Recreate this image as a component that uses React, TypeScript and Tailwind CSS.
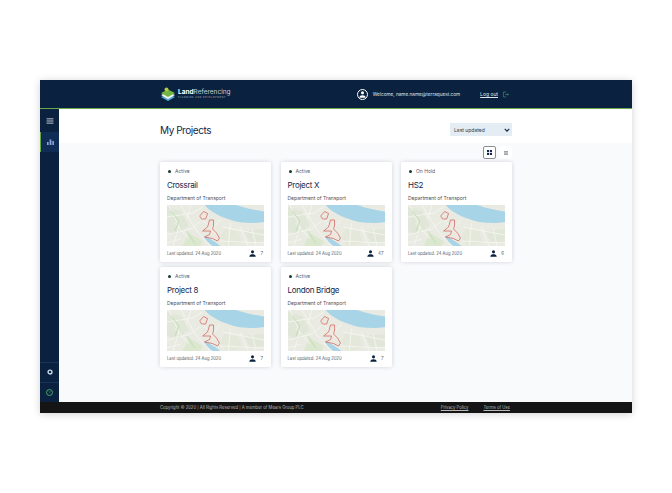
import React from "react";

const font = { fontFamily: "Inter, 'Liberation Sans', sans-serif" };

function MapThumb() {
  return (
    <svg viewBox="0 0 98 41" className="block h-[41px] w-full blur-[0.3px]" preserveAspectRatio="none">
      <rect width="98" height="41" fill="#e9eae2" />
      <path d="M0 2L14 6L22 20L10 30L0 26Z" fill="#e0e7d8" />
      <path d="M22 28L36 36L34 41H16Z" fill="#dbe7cf" />
      <path d="M58 24L72 26L76 38L60 41L54 32Z" fill="#e3e8da" />
      <path d="M78 26L98 24V36L84 38Z" fill="#e0e7d8" />
      <path d="M2 0L12 22L6 41M0 12L26 8L36 2M14 0L30 26L44 41M0 30L24 24L34 16M24 0L20 14M32 10L50 30M54 14L46 24M8 18L22 34M56 22L98 30M64 18L62 41M74 22L82 41M86 24L90 41M54 36L98 38M0 38L14 34" stroke="#f8f7f2" strokeWidth="0.8" fill="none" />
      <path d="M4 6L12 16L8 26M20 26L28 38" stroke="#c8dfb9" strokeWidth="1.1" fill="none" />
      <path d="M38 0C44 7 54 12 66 15.5C77 18.5 89 18.5 98 17V6.5C90 5.5 78 3 70 0Z" fill="#a8d4e8" />
      <path d="M37 31C43 33 49 37 54 41H46C42 38 39 35 37 31Z" fill="#a8d4e8" />
      <path d="M33 11L37 6.5L41 8.5L39 14L35 14Z" fill="#f3e6dc" fillOpacity="0.4" stroke="#c9453f" strokeWidth="0.6" />
      <path d="M43 15L47 15L47 21L46 24L50 28L53 33L51 36L46 33.5L38 32L43 29.5L44 26L36 26L41 22Z" fill="#f3e6dc" fillOpacity="0.4" stroke="#c9453f" strokeWidth="0.6" />
    </svg>
  );
}

function UserIcon({ className, color = "#0a2240" }: { className: string; color?: string }) {
  return (
    <svg viewBox="0 0 12 12" className={className} fill={color}>
      <circle cx="6" cy="3.2" r="2.6" />
      <path d="M0.5 11.5C0.5 8.6 3 7.2 6 7.2S11.5 8.6 11.5 11.5Z" />
    </svg>
  );
}

function Card({ status, title, users }: { status: string; title: string; users: string }) {
  return (
    <div className="flex h-[100px] w-[111px] flex-col rounded-[2px] bg-white px-[7px] pt-[6px] shadow-[0_0_4px_rgba(30,40,70,0.18)]">
      <div className="flex h-[6px] items-center gap-[4px]">
        <span className="ml-[1px] h-[3px] w-[3px] rounded-full bg-[#143a2e]" />
        <span className="text-[5px] leading-[6px] text-[#5a6068]">{status}</span>
      </div>
      <div className="mt-[6px] text-[8px] leading-[10px] font-normal tracking-[-0.3px] text-[#12264a]">{title}</div>
      <div className="mt-[5px] text-[5px] leading-[6px] text-[#4a5058]">Department of Transport</div>
      <div className="mt-[4px]">
        <MapThumb />
      </div>
      <div className="mt-[4px] flex items-center justify-between pr-[1px]">
        <span className="text-[4.2px] leading-[6px] text-[#5a6068]">Last updated: 24 Aug 2020</span>
        <span className="flex items-center gap-[4px]">
          <UserIcon className="h-[7px] w-[7px]" />
          <span className="text-[4.5px] leading-[6px] text-[#5a6068]">{users}</span>
        </span>
      </div>
    </div>
  );
}

function Logo() {
  return (
    <div className="flex items-center gap-[2px]">
      <svg viewBox="0 0 16 15" className="h-[15px] w-[16px]">
        <path d="M8 7L15 10L8 14L1 10Z" fill="#5aa7d6" />
        <path d="M8 5L15 8L8 12L1 8Z" fill="#f1f5ef" />
        <path d="M8 2.5L15 6L8 10L1 6Z" fill="#6fb53f" />
        <circle cx="6.5" cy="2.5" r="2" fill="#b7c934" />
      </svg>
      <div className="flex flex-col">
        <div className="text-[6.5px] leading-[7px] text-[#c5d0dc]">
          <span className="font-bold text-white">Land</span>Referencing
        </div>
        <div className="text-[2.2px] leading-[3px] tracking-[0.6px] text-[#aab6c4]">PLANNING AND DEVELOPMENT</div>
      </div>
    </div>
  );
}

export default function App() {
  return (
    <div style={font} className="h-[493px] w-[672px] overflow-hidden bg-white pt-[80px] pl-[40px]">
      <div className="flex h-[333px] w-[592px] flex-col shadow-[0_1px_8px_rgba(0,0,0,0.18)]">
        <header className="flex h-[29px] shrink-0 items-center border-b border-[#6aa84f] bg-[#0a2240] pr-[123px] pl-[120px]">
          <Logo />
          <div className="ml-auto flex items-center gap-[5px]">
            <div className="flex h-[11px] w-[11px] items-center justify-center overflow-hidden rounded-full border border-white bg-[#0a2240]">
              <UserIcon className="h-[7px] w-[7px]" color="#ffffff" />
            </div>
            <span className="text-[4.7px] leading-[6px] text-[#dfe5ec]">Welcome, name.name@terraquest.com</span>
          </div>
          <span className="ml-[20px] text-[5px] leading-[6px] text-[#dfe5ec] underline">Log out</span>
          <svg viewBox="0 0 10 10" className="ml-[4px] h-[7px] w-[7px]" fill="none" stroke="#3f8f5f" strokeWidth="1">
            <path d="M6 1.5H2V8.5H6M4.5 5H9.5M8 3.5L9.5 5L8 6.5" />
          </svg>
        </header>
        <div className="flex min-h-0 flex-1">
          <aside className="flex w-[19px] shrink-0 flex-col bg-[#0a2240]">
            <div className="flex h-[23px] items-center justify-center">
              <svg viewBox="0 0 8 7" className="h-[6px] w-[8px]" stroke="#d8dee6" strokeWidth="1">
                <path d="M0 1H8M0 3.5H8M0 6H8" />
              </svg>
            </div>
            <div className="flex h-[20px] items-center justify-center border-l-[1.5px] border-[#6aa84f] bg-[#0f2d55] pb-[1px]">
              <svg viewBox="0 0 7 6" className="h-[6px] w-[7px]" fill="#8fa6e0">
                <rect x="0" y="3" width="1.6" height="3" />
                <rect x="2.6" y="0.5" width="1.8" height="5.5" />
                <rect x="5.3" y="2" width="1.6" height="4" />
              </svg>
            </div>
            <div className="mt-auto flex h-[20px] items-center justify-center border-t border-[#17345c] pb-[1px]">
              <svg viewBox="0 0 8 8" className="h-[6px] w-[6px]">
                <circle cx="4" cy="4" r="2.6" fill="none" stroke="#cfe0ee" strokeWidth="1.8" />
              </svg>
            </div>
            <div className="flex h-[20px] items-center justify-center border-t border-[#17345c]">
              <div className="flex h-[7px] w-[7px] items-center justify-center rounded-full border border-[#4fa86a] text-[4px] leading-none text-[#4fa86a]">?</div>
            </div>
          </aside>
          <main className="flex min-w-0 flex-1 flex-col bg-[#f9fafc]">
            <div className="flex h-[34px] shrink-0 items-start justify-between bg-white pt-[14px] pr-[120px] pl-[101px]">
              <h1 className="text-[10px] leading-[14px] font-normal tracking-[-0.45px] text-[#12264a]">My Projects</h1>
              <div className="flex h-[13px] w-[62px] items-center justify-between bg-[#e3edf3] pr-[2px] pl-[4px]">
                <span className="text-[5px] leading-[6px] text-[#333a44]">Last updated</span>
                <svg viewBox="0 0 8 5" className="h-[4px] w-[6px]" fill="none" stroke="#12264a" strokeWidth="1.5">
                  <path d="M1 1L4 4L7 1" />
                </svg>
              </div>
            </div>
            <div className="pr-[120px] pl-[101px]">
              <div className="flex h-[19px] items-center justify-end gap-[3px]">
                <div className="flex h-[13px] w-[13px] items-center justify-center rounded-[2px] border border-[#8a8f96] bg-white">
                  <svg viewBox="0 0 5 5" className="h-[5px] w-[5px]" fill="#12264a">
                    <rect width="2.1" height="2.1" />
                    <rect x="2.9" width="2.1" height="2.1" />
                    <rect y="2.9" width="2.1" height="2.1" />
                    <rect x="2.9" y="2.9" width="2.1" height="2.1" />
                  </svg>
                </div>
                <div className="flex h-[13px] w-[13px] items-center justify-center rounded-[2px] bg-white">
                  <svg viewBox="0 0 5 5" className="h-[4px] w-[4px]" stroke="#4a5560" strokeWidth="0.8">
                    <path d="M0 0.8H5M0 2.5H5M0 4.2H5" />
                  </svg>
                </div>
              </div>
              <div className="grid grid-cols-[111px_111px_111px] gap-x-[9.5px] gap-y-[5px]">
                <Card status="Active" title="Crossrail" users="7" />
                <Card status="Active" title="Project X" users="47" />
                <Card status="On Hold" title="HS2" users="6" />
                <Card status="Active" title="Project 8" users="7" />
                <Card status="Active" title="London Bridge" users="7" />
              </div>
            </div>
          </main>
        </div>
        <footer className="flex h-[11px] shrink-0 items-center bg-[#151515] pr-[122px] pl-[120px] text-[4.2px] leading-[5px] text-[#b9b9b9]">
          <span>Copyright © 2020 | All Rights Reserved | A member of Mears Group PLC</span>
          <span className="ml-auto underline">Privacy Policy</span>
          <span className="ml-[15px] underline">Terms of Use</span>
        </footer>
      </div>
    </div>
  );
}
